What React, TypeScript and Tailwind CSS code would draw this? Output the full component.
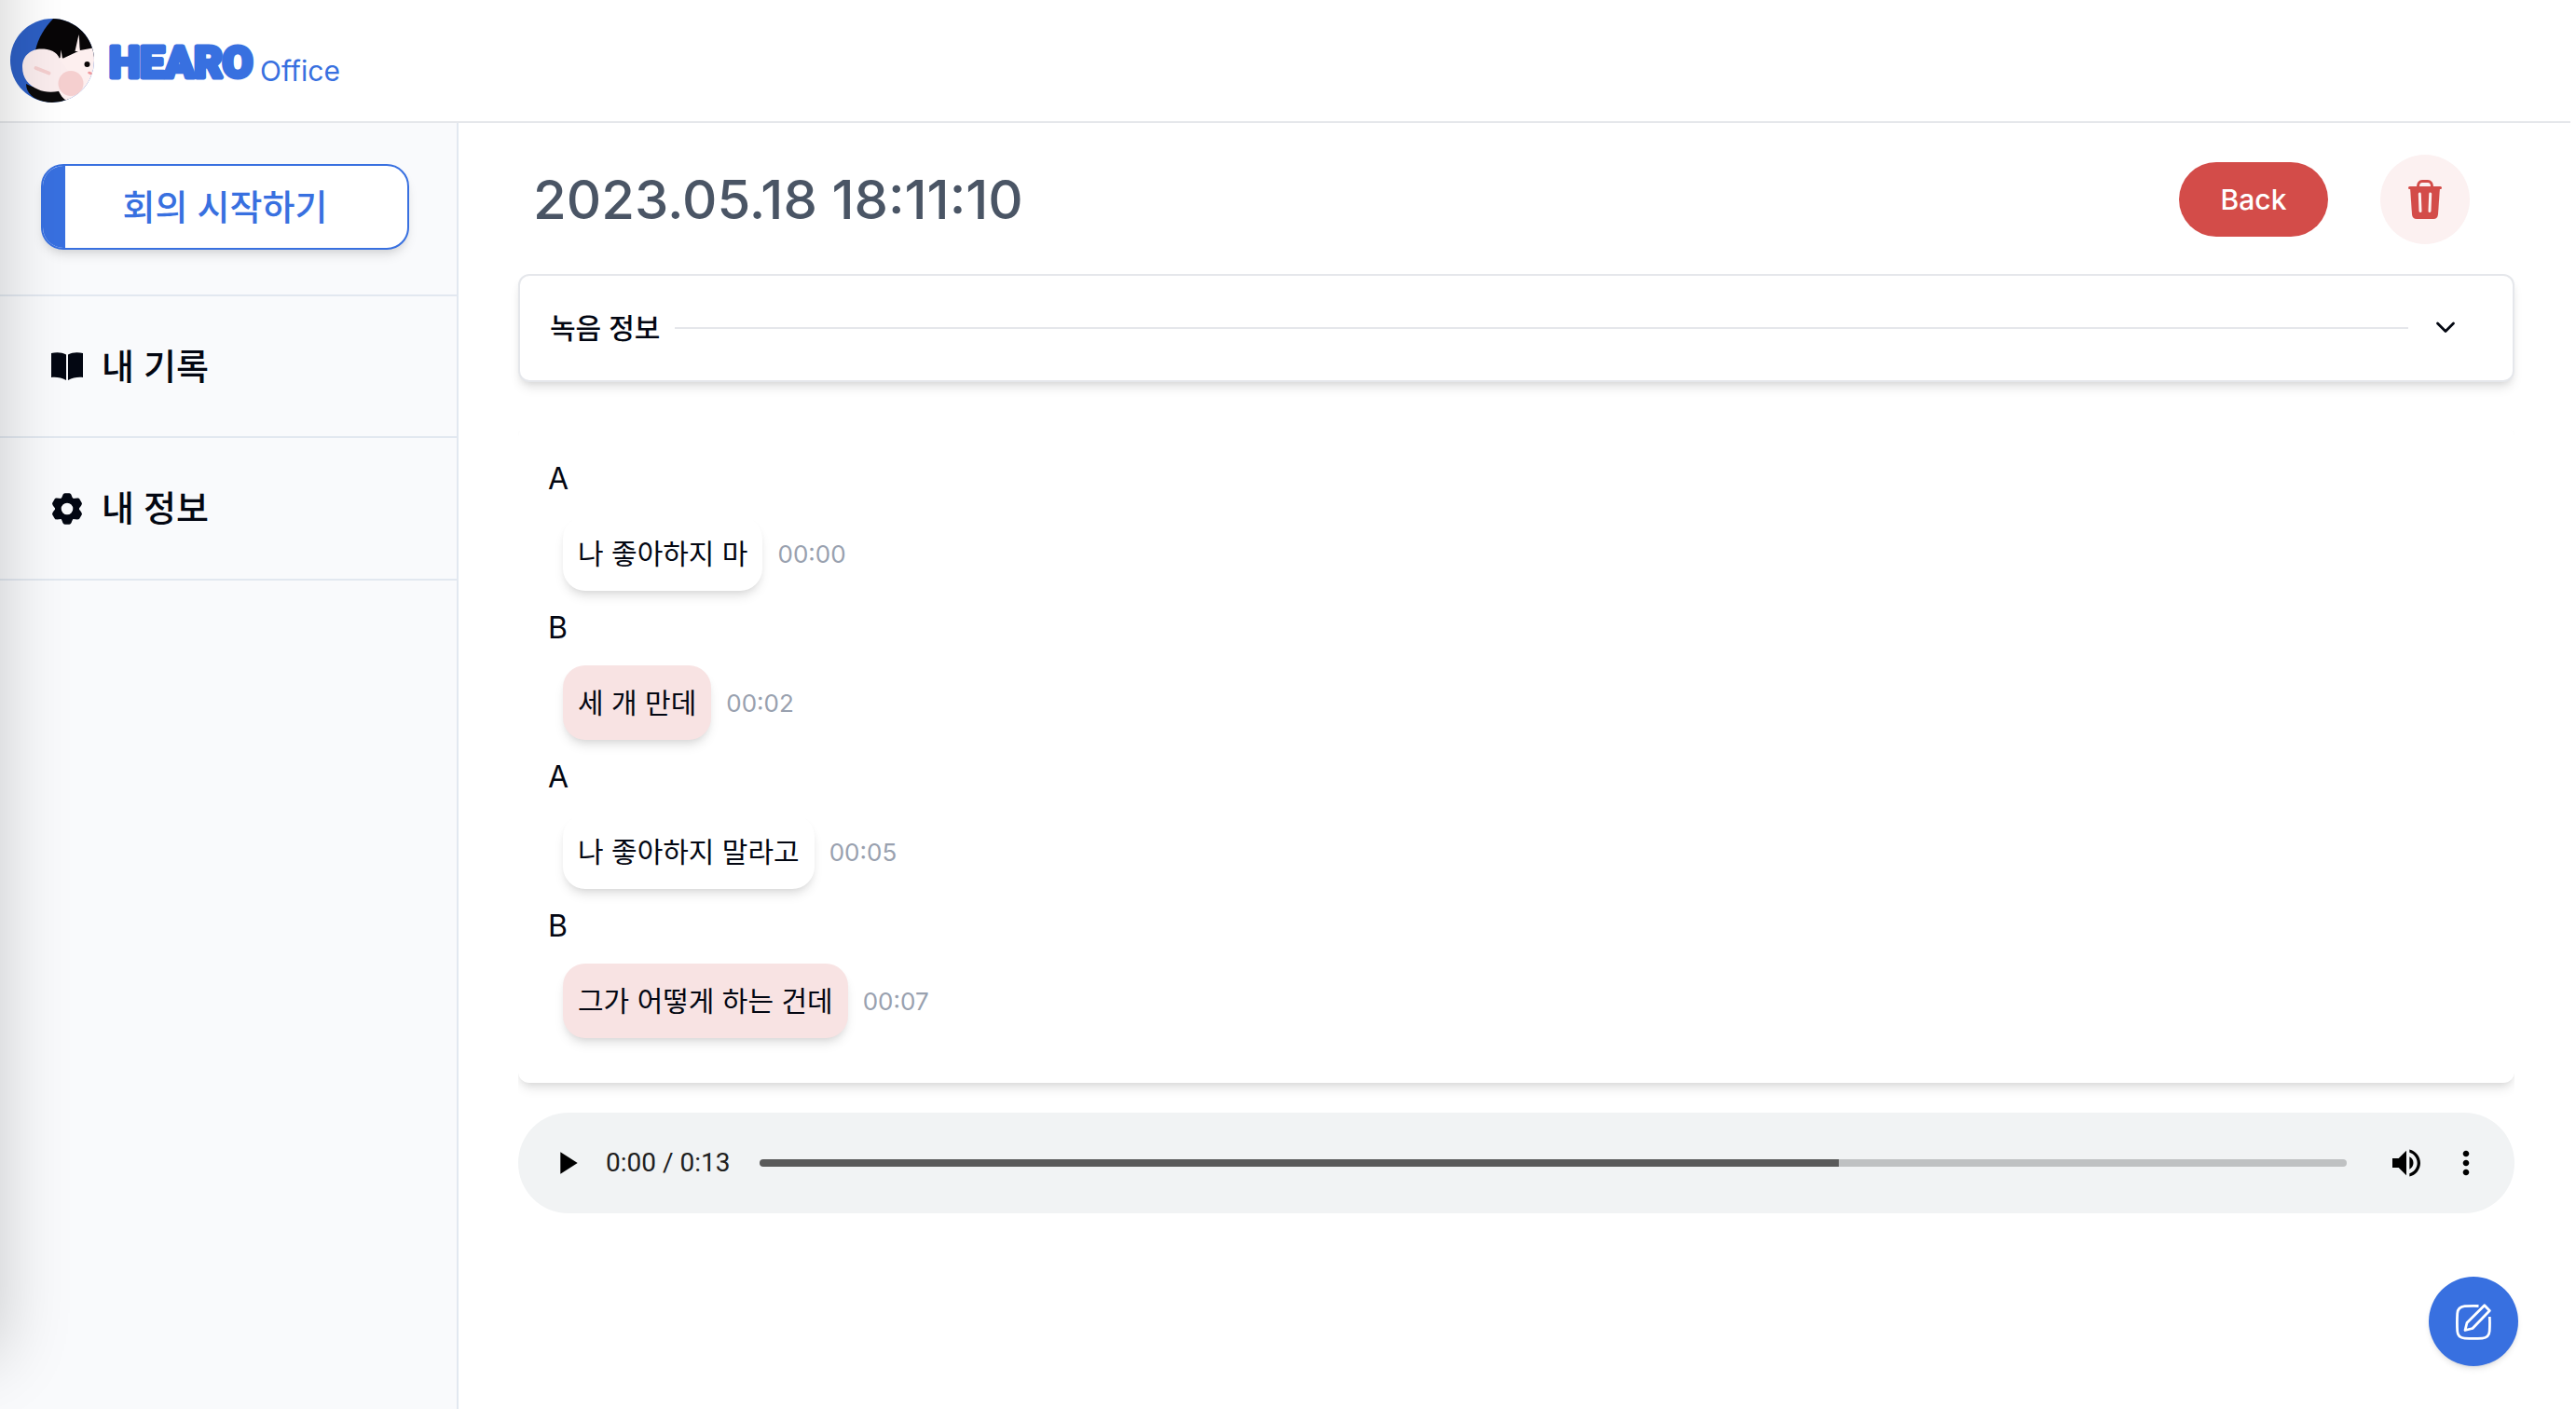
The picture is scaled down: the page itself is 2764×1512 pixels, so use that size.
import { MdMoreVert, MdPlayArrow, MdVolumeUp } from "react-icons/md";

type Utterance = { speaker: string; text: string; time: string; tinted?: boolean };

const utterances: Utterance[] = [
  { speaker: "A", text: "나 좋아하지 마", time: "00:00" },
  { speaker: "B", text: "세 개 만데", time: "00:02", tinted: true },
  { speaker: "A", text: "나 좋아하지 말라고", time: "00:05" },
  { speaker: "B", text: "그가 어떻게 하는 건데", time: "00:07", tinted: true },
];

function Avatar() {
  return (
    <svg viewBox="0 0 90 90" className="size-[90px] shrink-0" aria-hidden="true">
      <defs>
        <clipPath id="avatar-clip">
          <circle cx="45" cy="45" r="45" />
        </clipPath>
      </defs>
      <g clipPath="url(#avatar-clip)">
        <rect width="90" height="90" fill="#2d5fc4" />
        <path d="M48 -2C38 8 30 20 27 34L44 60L92 40V-2Z" fill="#080607" />
        <path d="M17 70C17 84 32 92 62 92V72H40C30 75 24 74 17 70Z" fill="#0c0b0b" />
        <path d="M92 31L75 34L57 42.500L53 42L44 60L52 78C54 82 56 85 60 88V92H92Z" fill="#fdefef" />
        <path d="M13 52C13 39 23 32.500 33 32.500C42 32.500 50 35 53 43L66 62L58 76C51 79 38 80 30 76C20 72 13 64 13 52Z" fill="#fbedee" />
        <path d="M69.500 35C71 29 72 23 73.500 17C74.500 23 74 29 75 35Z" fill="#fdefef" />
        <path d="M53.500 43L54.500 33.500L56 43Z" fill="#fdefef" />
        <path d="M27.500 53L41.500 58.500" stroke="#f5cfcf" strokeWidth="4" strokeLinecap="round" />
        <circle cx="65" cy="69.500" r="13.500" fill="#f5cfcf" />
        <circle cx="82.500" cy="49" r="3" fill="#0a0707" />
        <path d="M84.500 58L87 59" stroke="#f0989c" strokeWidth="2.500" strokeLinecap="round" />
      </g>
    </svg>
  );
}

function Wordmark() {
  return (
    <svg viewBox="0 0 154 50" className="h-[50px] w-[154px] overflow-visible" role="img" aria-label="HEARO">
      <text
        x="0"
        y="46"
        className="font-['Roboto',sans-serif] text-[47px] font-extrabold"
        fill="currentColor"
        stroke="currentColor"
        strokeWidth="5"
        strokeLinejoin="round"
      >
        HEARO
      </text>
    </svg>
  );
}

function BookIcon() {
  return (
    <svg viewBox="0 0 34 30" className="h-[30px] w-[34px]" fill="currentColor" aria-hidden="true">
      <path d="M0 1C5 -0.300 11 -0.400 16 2.500V30C11 27 5 26.500 0 27Z" />
      <path d="M34 1C29 -0.300 23 -0.400 18 2.500V30C23 27 29 26.500 34 27Z" />
    </svg>
  );
}

function GearIcon() {
  return (
    <svg viewBox="-17 -17 34 34" className="size-[34px]" fill="currentColor" aria-hidden="true">
      <circle r="9.600" fill="none" stroke="currentColor" strokeWidth="6.600" />
      {[0, 60, 120, 180, 240, 300].map((angle) => (
        <path
          key={angle}
          transform={`rotate(${angle})`}
          d="M-7 -10C-5 -12 -5 -16.800 -2.200 -16.800H2.200C5 -16.800 5 -12 7 -10L4 -8H-4Z"
        />
      ))}
    </svg>
  );
}

function TrashIcon() {
  return (
    <svg viewBox="0 0 36 42" className="h-[42px] w-9" fill="currentColor" aria-hidden="true">
      <path d="M10.500 8V7C10.500 3.500 12.500 1.500 15 1.500H21C23.500 1.500 25.500 3.500 25.500 7V8" fill="none" stroke="currentColor" strokeWidth="3" />
      <rect y="7" width="36" height="3" rx="1.500" />
      <path d="M2 8H34L32 37C31.700 40.500 30 42 27 42H9C6 42 4.300 40.500 4 37Z" />
      <path d="M12.300 15L13 33.500M23.700 15L23 33.500" stroke="#fcf1f1" strokeWidth="3" strokeLinecap="round" />
    </svg>
  );
}

function EditIcon() {
  return (
    <svg viewBox="0 0 38 39" className="h-[39px] w-[38px]" fill="none" stroke="currentColor" strokeWidth="2.800" strokeLinejoin="round" aria-hidden="true">
      <path d="M24.500 2.500C19 2.200 14 2.400 9.500 2.700C4.500 3.200 2 5.500 1.700 10.500C1.300 17 1.300 23 1.700 29.500C2 34.500 4.500 36.700 9.500 37.100C16 37.600 22 37.600 28.500 37.100C33.500 36.700 35.800 34.500 36.200 29.500C36.500 24.500 36.600 19.500 36.300 14" />
      <path d="M10 28.500L12 20.500L30.800 1.700L36.300 7.500L18 26.500Z" />
    </svg>
  );
}

function ChevronIcon() {
  return (
    <svg viewBox="0 0 40 40" className="size-10" fill="none" stroke="currentColor" strokeWidth="2.800" strokeLinecap="round" strokeLinejoin="round" aria-hidden="true">
      <path d="M11.500 15L20 23.500L28.500 15" />
    </svg>
  );
}

function Header() {
  return (
    <header className="border-b-2 border-gray-200 pb-5 pl-[11px] pt-5">
      <a href="#" className="flex w-fit items-center text-[#3870e0]">
        <Avatar />
        <span className="ml-4 flex items-baseline gap-2 self-end pb-2.5">
          <Wordmark />
          <span className="text-[30px] leading-[48px]">Office</span>
        </span>
      </a>
    </header>
  );
}

function Sidebar() {
  return (
    <aside className="w-[492px] shrink-0 border-r-2 border-slate-200 bg-[#f9fafc]">
      <div className="border-b-2 border-slate-200 px-11 pb-12 pt-11">
        <button
          type="button"
          className="flex h-[92px] w-[395px] items-stretch overflow-hidden rounded-[24px] border-2 border-[#3870e0] bg-white text-[38px] font-medium text-[#3870e0] shadow-[0_8px_12px_-2px_rgb(0_0_0/0.1),0_4px_8px_-4px_rgb(0_0_0/0.1)]"
        >
          <span className="w-6 bg-[#3870e0]" />
          <span className="flex flex-1 items-center justify-center pr-6">회의 시작하기</span>
        </button>
      </div>
      <nav className="text-[38px] font-medium">
        <a href="#" className="flex h-[152px] items-center gap-5 border-b-2 border-slate-200 pl-[55px]">
          <BookIcon />
          내 기록
        </a>
        <a href="#" className="flex h-[153px] items-center gap-5 border-b-2 border-slate-200 pl-[55px]">
          <GearIcon />
          내 정보
        </a>
      </nav>
    </aside>
  );
}

function Transcript() {
  return (
    <div className="overflow-hidden pb-8">
      <ul className="flex flex-col gap-4 rounded-xl bg-white px-8 pb-12 pt-8 shadow-[0_8px_12px_-2px_rgb(0_0_0/0.1),0_4px_8px_-4px_rgb(0_0_0/0.1)]">
        {utterances.map((u) => (
          <li key={u.time} className="flex flex-col gap-4">
            <span className="text-[32px] leading-[48px]">{u.speaker}</span>
            <div className="flex items-center gap-4 pl-4">
              <p
                className={`flex h-20 items-center rounded-[24px] px-4 text-[30px] shadow-[0_8px_12px_-2px_rgb(0_0_0/0.1),0_4px_8px_-4px_rgb(0_0_0/0.1)] ${u.tinted ? "bg-[#f8e3e3]" : "bg-white"}`}
              >
                {u.text}
              </p>
              <span className="text-[26px] text-gray-400">{u.time}</span>
            </div>
          </li>
        ))}
      </ul>
    </div>
  );
}

function AudioPlayer() {
  return (
    <div className="flex h-[108px] items-center rounded-full bg-[#f1f3f4] px-8 text-black">
      <button type="button" aria-label="재생">
        <MdPlayArrow size={40} />
      </button>
      <span className="ml-[22px] font-['Roboto',sans-serif] text-[28px] text-[#202020]">0:00 / 0:13</span>
      <input
        type="range"
        aria-label="재생 위치"
        min={0}
        max={100}
        defaultValue={0}
        className="ml-8 mr-11 h-2 min-w-0 flex-1 appearance-none rounded-full bg-[linear-gradient(to_right,#5a5a5a_68%,#bfc1c2_68%)] [&::-webkit-slider-thumb]:size-2 [&::-webkit-slider-thumb]:appearance-none"
      />
      <button type="button" aria-label="음량">
        <MdVolumeUp size={40} />
      </button>
      <button type="button" aria-label="더보기" className="ml-6">
        <MdMoreVert size={40} />
      </button>
    </div>
  );
}

export default function App() {
  return (
    <div className="flex min-h-screen flex-col overflow-x-hidden bg-white pr-1.5 font-['Inter','Noto_Sans_CJK_KR',sans-serif] text-[#030712]">
      <Header />
      <div className="flex flex-1">
        <Sidebar />
        <main className="min-w-0 flex-1 pl-16 pr-[60px] pt-[34px]">
          <div className="flex items-center pl-4 pr-12">
            <h1 className="flex-1 text-[58px] font-medium leading-[72px] text-gray-600">2023.05.18 18:11:10</h1>
            <button type="button" className="h-20 w-40 rounded-full bg-[#d34c49] text-[30px] font-medium text-white">
              Back
            </button>
            <button
              type="button"
              aria-label="삭제"
              className="ml-14 flex size-24 items-center justify-center rounded-full bg-[#fcf1f1] text-[#d34c49]"
            >
              <TrashIcon />
            </button>
          </div>
          <button
            type="button"
            aria-expanded="false"
            className="mb-12 mt-8 flex h-[116px] w-full items-center rounded-xl border-2 border-gray-200 bg-white pl-8 pr-[52px] shadow-[0_8px_12px_-2px_rgb(0_0_0/0.1),0_4px_8px_-4px_rgb(0_0_0/0.1)]"
          >
            <span className="text-[30px] font-medium">녹음 정보</span>
            <span className="ml-4 mr-5 h-0.5 flex-1 bg-gray-200" />
            <ChevronIcon />
          </button>
          <Transcript />
          <AudioPlayer />
        </main>
      </div>
      <button
        type="button"
        aria-label="메모 작성"
        className="fixed bottom-[46px] right-[62px] flex size-24 items-center justify-center rounded-full bg-[#3870e0] text-white shadow-md"
      >
        <EditIcon />
      </button>
      <div className="pointer-events-none fixed -top-24 bottom-14 right-full w-96 shadow-[0_0_72px_rgb(0_0_0/0.2)]" />
    </div>
  );
}
